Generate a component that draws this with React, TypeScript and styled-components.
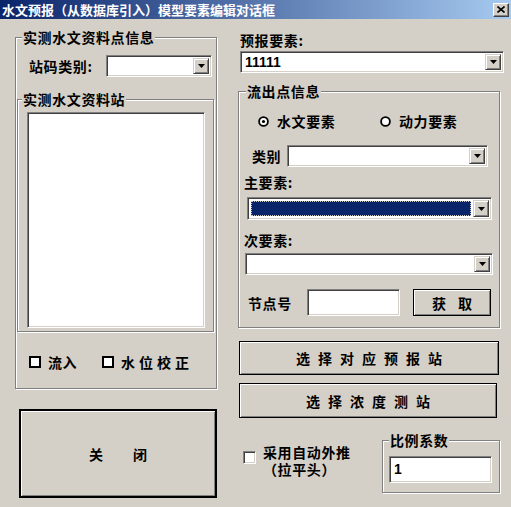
import React from 'react';
import styled, { createGlobalStyle, css } from 'styled-components';

const GlobalStyle = createGlobalStyle`
	html, body {
		margin: 0;
		padding: 0;
		background: #d4d0c8;
	}
	body {
		font-family: 'Noto Sans CJK SC', 'Liberation Sans', sans-serif;
		font-size: 14px;
		color: #000;
	}
`;

const sunken = css`
	border-style: solid;
	border-width: 1px;
	border-color: #808080 #fff #fff #808080;
	box-shadow: inset 1px 1px #404040, inset -1px -1px #d4d0c8;
	box-sizing: border-box;
`;

const etched = css`
	border: 1px solid #808080;
	box-shadow: inset 1px 1px #fff, 1px 1px #fff;
	box-sizing: border-box;
`;

const Window = styled.div`
	width: 511px;
	height: 507px;
	background: #d4d0c8;
	overflow: hidden;
`;

const TitleBar = styled.div`
	height: 19px;
	display: flex;
	align-items: center;
	justify-content: space-between;
	background: linear-gradient(to right, #0a246a, #a6caf0);
	padding: 0 2px 0 2px;
`;

const TitleText = styled.span`
	color: #fff;
	font-weight: bold;
	font-size: 13px;
	line-height: 19px;
	white-space: nowrap;
`;

const CloseBox = styled.div`
	width: 16px;
	height: 14px;
	box-sizing: border-box;
	background: #d4d0c8;
	border-style: solid;
	border-width: 1px;
	border-color: #fff #404040 #404040 #fff;
	box-shadow: inset -1px -1px #808080;
	display: flex;
	align-items: center;
	justify-content: center;
`;

const Client = styled.div`
	display: flex;
	padding-left: 15px;
`;

const LeftCol = styled.div`
	width: 202px;
	display: flex;
	flex-direction: column;
`;

const RightCol = styled.div`
	width: 266px;
	margin-left: 21px;
	display: flex;
	flex-direction: column;
`;

const Group = styled.div<{ $w: number; $h: number }>`
	${etched};
	position: relative;
	width: ${(p) => p.$w}px;
	height: ${(p) => p.$h}px;
	display: flex;
	flex-direction: column;
`;

const GroupTitle = styled.span<{ $left?: number }>`
	position: absolute;
	top: -9px;
	left: ${(p) => p.$left ?? 6}px;
	padding: 0 1px;
	background: #d4d0c8;
	font-weight: bold;
	line-height: 16px;
	letter-spacing: 0.6px;
	white-space: nowrap;
`;

const Label = styled.span<{ $w?: number; $spacing?: number }>`
	font-weight: bold;
	line-height: 16px;
	white-space: nowrap;
	letter-spacing: ${(p) => p.$spacing ?? 0.6}px;
	${(p) => p.$w && `width: ${p.$w}px; flex: none;`}
`;

const Row = styled.div<{ $mt?: number; $ml?: number }>`
	display: flex;
	align-items: center;
	margin-top: ${(p) => p.$mt ?? 0}px;
	margin-left: ${(p) => p.$ml ?? 0}px;
`;

const ComboBox = styled.div<{ $w: number; $h?: number }>`
	${sunken};
	width: ${(p) => p.$w}px;
	height: ${(p) => p.$h ?? 22}px;
	background: #fff;
	display: flex;
	padding: 2px;
	flex: none;
`;

const ComboText = styled.div<{ $selected?: boolean }>`
	flex: 1;
	font-family: 'Liberation Sans', sans-serif;
	font-weight: bold;
	font-size: 14px;
	line-height: 16px;
	padding-left: 2px;
	${(p) =>
		p.$selected &&
		`background: #0a246a; outline: 1px dotted #c8c8c8; outline-offset: -1px; margin: 1px 2px 1px 1px;`}
`;

const ArrowButton = styled.div`
	width: 16px;
	box-sizing: border-box;
	background: #d4d0c8;
	border-style: solid;
	border-width: 1px;
	border-color: #d4d0c8 #404040 #404040 #d4d0c8;
	box-shadow: inset 1px 1px #fff, inset -1px -1px #808080;
	display: flex;
	align-items: center;
	justify-content: center;
`;

const ListBox = styled.div`
	${sunken};
	width: 178px;
	height: 216px;
	background: #fff;
	margin: 12px 0 0 9px;
`;

const Edit = styled.div<{ $w: number; $h: number }>`
	${sunken};
	width: ${(p) => p.$w}px;
	height: ${(p) => p.$h}px;
	background: #fff;
	font-family: 'Liberation Sans', sans-serif;
	font-weight: bold;
	font-size: 14px;
	line-height: 18px;
	padding: 3px 4px;
	flex: none;
`;

const BlackCheck = styled.span`
	width: 12px;
	height: 12px;
	box-sizing: border-box;
	border: 2px solid #000;
	background: #fff;
	flex: none;
	margin-right: 7px;
`;

const SunkenCheck = styled.span`
	${sunken};
	width: 13px;
	height: 13px;
	background: #fff;
	flex: none;
	margin: 7px 7px 0 0;
`;

const Button = styled.div<{ $w: number; $h: number; $spacing: number; $thick?: boolean }>`
	width: ${(p) => p.$w}px;
	height: ${(p) => p.$h}px;
	box-sizing: border-box;
	border: ${(p) => (p.$thick ? 2 : 1)}px solid #000;
	box-shadow: inset 1px 1px #fff, inset -1px -1px #808080;
	background: #d4d0c8;
	display: flex;
	align-items: center;
	justify-content: center;
	font-weight: bold;
	letter-spacing: ${(p) => p.$spacing}px;
	text-indent: ${(p) => p.$spacing}px;
	flex: none;
	white-space: nowrap;
`;

const RadioItem = styled.div<{ $w?: number }>`
	display: flex;
	align-items: center;
	gap: 8px;
	${(p) => p.$w && `width: ${p.$w}px;`}
`;

const BottomRow = styled.div`
	display: flex;
	align-items: flex-start;
	margin-top: 22px;
`;

const AutoCheck = styled.div`
	display: flex;
	align-items: flex-start;
	margin: 4px 0 0 5px;
`;

const TwoLines = styled.div`
	display: flex;
	flex-direction: column;
	font-weight: bold;
	line-height: 17px;
	letter-spacing: 0.6px;
`;

const Arrow = () => (
	<svg width='7' height='4' viewBox='0 0 7 4'>
		<path d='M0 0 H7 L3.5 4 Z' fill='#000' />
	</svg>
);

const Combo: React.FC<{ w: number; h?: number; text?: string; selected?: boolean }> = ({
	w,
	h,
	text,
	selected
}) => (
	<ComboBox $w={w} $h={h}>
		<ComboText $selected={selected}>{text}</ComboText>
		<ArrowButton>
			<Arrow />
		</ArrowButton>
	</ComboBox>
);

const Radio: React.FC<{ checked?: boolean }> = ({ checked }) => (
	<svg width='11' height='11' viewBox='0 0 11 11'>
		<circle cx='5.5' cy='5.5' r='4.4' fill='#fff' stroke='#000' strokeWidth='1.8' />
		{checked && <circle cx='5.5' cy='5.5' r='1.6' fill='#000' />}
	</svg>
);

export default function App() {
	return (
		<Window>
			<GlobalStyle />
			<TitleBar>
				<TitleText>水文预报（从数据库引入）模型要素编辑对话框</TitleText>
				<CloseBox>
					<svg width='8' height='7' viewBox='0 0 8 7'>
						<path d='M0.5 0.5 L7.5 6.5 M7.5 0.5 L0.5 6.5' stroke='#000' strokeWidth='1.6' />
					</svg>
				</CloseBox>
			</TitleBar>
			<Client>
				<LeftCol>
					<div style={{ marginTop: 18 }} />
					<Group $w={202} $h={352}>
						<GroupTitle>实测水文资料点信息</GroupTitle>
						<Row $mt={17} $ml={13}>
							<Label $w={77}>站码类别:</Label>
							<Combo w={106} />
						</Row>
						<div style={{ marginTop: 22, marginLeft: 1 }}>
							<Group $w={197} $h={233}>
								<GroupTitle $left={4}>实测水文资料站</GroupTitle>
								<ListBox />
							</Group>
						</div>
						<Row $mt={22} $ml={13}>
							<BlackCheck />
							<Label $w={54}>流入</Label>
							<BlackCheck />
							<Label $spacing={4}>水位校正</Label>
						</Row>
					</Group>
					<div style={{ marginTop: 20, marginLeft: 4 }}>
						<Button $w={198} $h={89} $spacing={30} $thick>
							关闭
						</Button>
					</div>
				</LeftCol>
				<RightCol>
					<Row $mt={13} $ml={2}>
						<Label>预报要素:</Label>
					</Row>
					<Row $mt={3} $ml={2}>
						<Combo w={264} text='11111' />
					</Row>
					<div style={{ marginTop: 18 }}>
						<Group $w={262} $h={237}>
							<GroupTitle $left={7}>流出点信息</GroupTitle>
							<Row $mt={21} $ml={19}>
								<RadioItem $w={122}>
									<Radio checked />
									<Label>水文要素</Label>
								</RadioItem>
								<RadioItem>
									<Radio />
									<Label>动力要素</Label>
								</RadioItem>
							</Row>
							<Row $mt={16} $ml={13}>
								<Label $w={35}>类别</Label>
								<Combo w={201} />
							</Row>
							<Row $mt={7} $ml={5}>
								<Label>主要素:</Label>
							</Row>
							<Row $mt={7} $ml={8}>
								<Combo w={245} h={23} selected />
							</Row>
							<Row $mt={12} $ml={5}>
								<Label>次要素:</Label>
							</Row>
							<Row $mt={5} $ml={6}>
								<Combo w={248} />
							</Row>
							<Row $mt={14} $ml={9}>
								<Label $w={59}>节点号</Label>
								<Edit $w={93} $h={27} />
								<div style={{ marginLeft: 13 }}>
									<Button $w={78} $h={27} $spacing={12}>
										获取
									</Button>
								</div>
							</Row>
						</Group>
					</div>
					<Row $mt={13} $ml={1}>
						<Button $w={260} $h={34} $spacing={8}>
							选择对应预报站
						</Button>
					</Row>
					<Row $mt={8} $ml={1}>
						<Button $w={258} $h={35} $spacing={8}>
							选择浓度测站
						</Button>
					</Row>
					<BottomRow>
						<AutoCheck>
							<SunkenCheck />
							<TwoLines>
								<span>采用自动外推</span>
								<span>（拉平头）</span>
							</TwoLines>
						</AutoCheck>
						<div style={{ marginLeft: 'auto', marginRight: 4 }}>
							<Group $w={118} $h={53}>
								<GroupTitle $left={6}>比例系数</GroupTitle>
								<Row $mt={15} $ml={6}>
									<Edit $w={103} $h={27}>
										1
									</Edit>
								</Row>
							</Group>
						</div>
					</BottomRow>
				</RightCol>
			</Client>
		</Window>
	);
}
